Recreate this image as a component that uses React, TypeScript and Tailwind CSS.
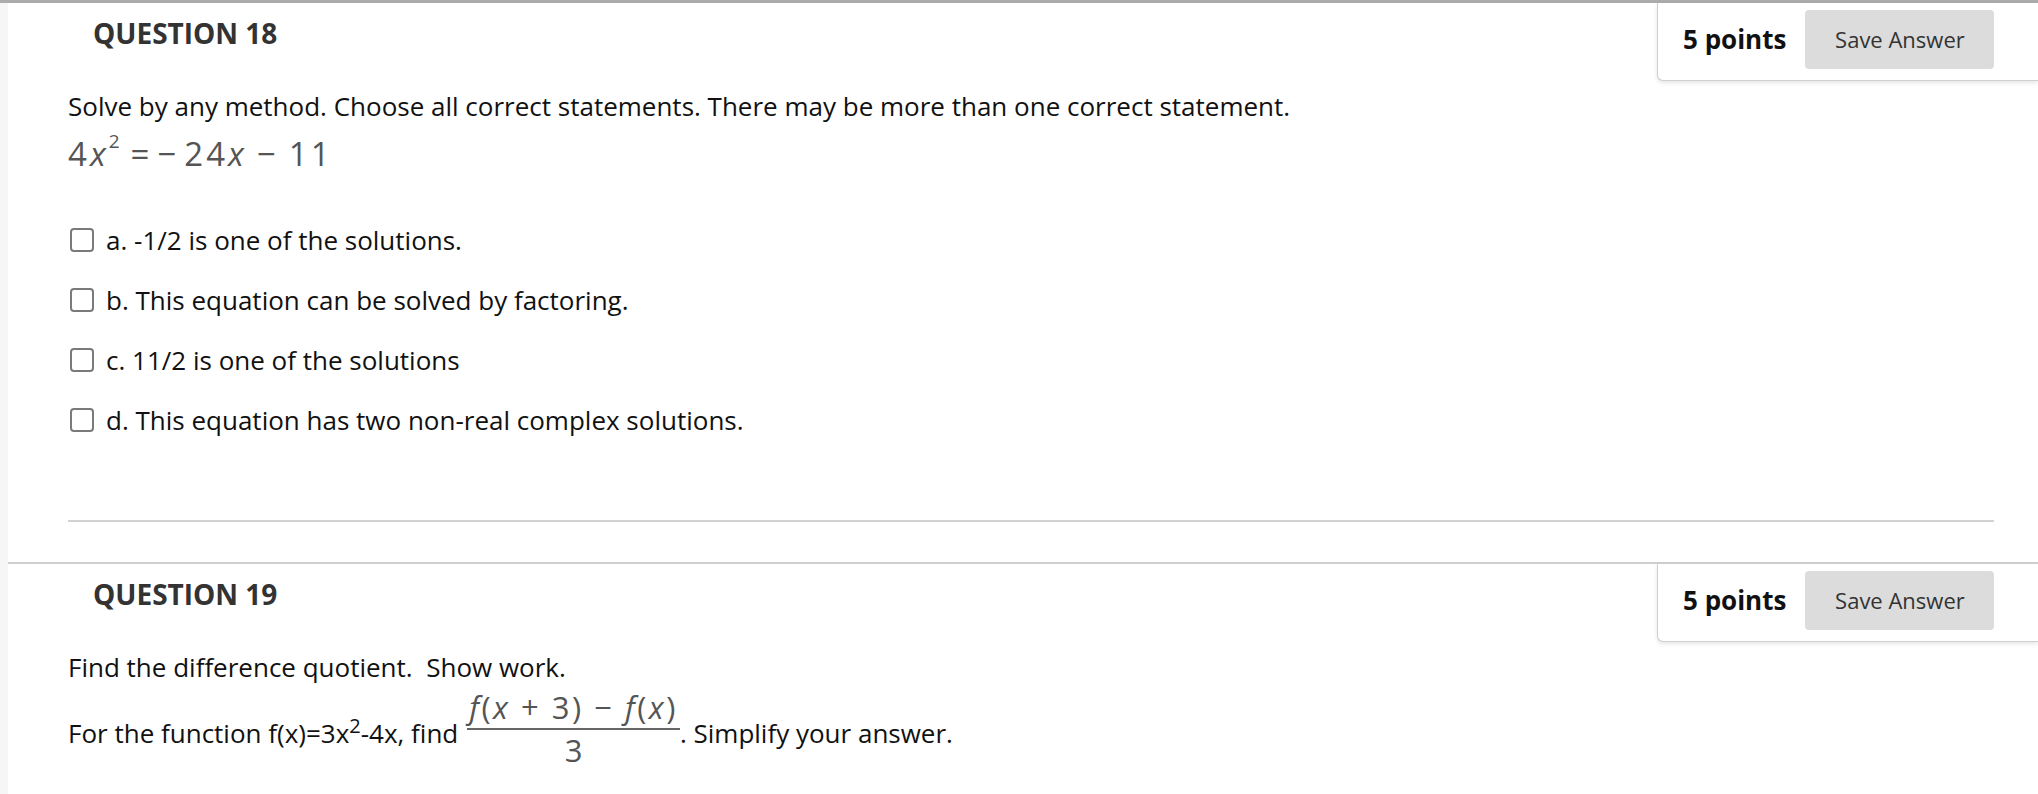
import { ReactNode } from "react";

interface QuestionProps {
  number: number;
  points: number;
  children: ReactNode;
  first?: boolean;
}

const options = [
  "a. -1/2 is one of the solutions.",
  "b. This equation can be solved by factoring.",
  "c. 11/2 is one of the solutions",
  "d. This equation has two non-real complex solutions.",
];

function Question({ number, points, children, first }: QuestionProps) {
  return (
    <section className={first ? "" : "border-t-2 border-[#cfcfcf]"}>
      {/* Header: title + points box */}
      <div className="flex items-start justify-between">
        <h2 className="ml-[85px] mt-[11px] text-[28px] font-bold leading-[38px] text-[#333]">
          QUESTION {number}
        </h2>
        <div className="flex h-[78px] w-[381px] items-start gap-[19px] rounded-bl-md border-b border-l border-[#cfcfcf] bg-white pl-[25px] pt-[7px] shadow-[0_2px_4px_rgba(0,0,0,0.1)]">
          <span className="text-[26px] font-bold leading-[59px] text-[#111]">{points} points</span>
          <button className="h-[59px] w-[189px] rounded-[4px] bg-[#dcdcdc] text-[22px] text-[#333]">
            Save Answer
          </button>
        </div>
      </div>
      <div className="pl-[60px] pr-[44px]">{children}</div>
    </section>
  );
}

function Fraction() {
  return (
    <span className="ml-[9px] inline-flex flex-col items-center align-[24px] text-[31px] text-[#555]">
      <span className="whitespace-pre px-[2px] leading-[30px] tracking-[2.5px]">
        <i>f</i>(<i>x</i> + 3) − <i>f</i>(<i>x</i>)
      </span>
      <span className="mt-[6px] h-[2px] w-full bg-[#666]" />
      <span className="mt-[5px] leading-[30px]">3</span>
    </span>
  );
}

export default function App() {
  return (
    <div className="flex min-h-screen border-t-[3px] border-[#ababab] bg-white font-['Open_Sans',sans-serif] text-[#111]">
      <div className="w-2 shrink-0 bg-[#f6f6f6]" />
      <div className="flex-1">
        <Question number={18} points={5} first>
          <p className="mt-[7px] text-[26px] leading-[36px]">
            Solve by any method. Choose all correct statements. There may be more than one correct statement.
          </p>
          <div className="mt-[10px] flex items-baseline text-[33px] leading-[40px] tracking-[3px] text-[#555]">
            <span>
              4<i>x</i>
              <sup className="top-[-0.95em] text-[19px]">2</sup>
            </span>
            <span className="ml-[8px]">=</span>
            <span className="ml-[5px]">−</span>
            <span className="ml-[5px]">
              24<i>x</i>
            </span>
            <span className="ml-[10px]">−</span>
            <span className="ml-[10px]">11</span>
          </div>
          <ul className="mt-[36px]">
            {options.map((opt) => (
              <li key={opt} className="flex h-[60px] items-center gap-[12px]">
                <span className="ml-[2px] h-[24px] w-[24px] shrink-0 rounded-[4px] border-2 border-[#7a7a7a] bg-white" />
                <span className="text-[26px] leading-[36px]">{opt}</span>
              </li>
            ))}
          </ul>
          <div className="mt-[70px] mb-[40px] h-[2px] bg-[#d2d2d2]" />
        </Question>

        <Question number={19} points={5}>
          <p className="mt-[7px] whitespace-pre text-[26px] leading-[36px]">
            Find the difference quotient.  Show work.
          </p>
          <p className="mt-[7px] text-[26px] leading-[36px]">
            For the function f(x)=3x<sup className="text-[20px]">2</sup>-4x, find
            <Fraction />. Simplify your answer.
          </p>
        </Question>
      </div>
    </div>
  );
}
